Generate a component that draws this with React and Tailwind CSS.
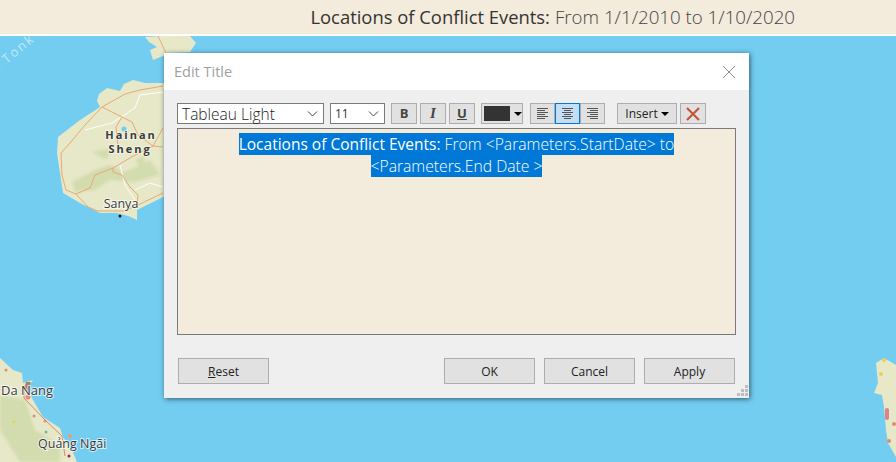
import React from 'react';

const ui = "font-['Open_Sans',sans-serif]";

// map background: Hainan and the bits of the Vietnamese coast
const MapBackground = () => (
  <svg className="absolute left-0 top-0" width="896" height="462" viewBox="0 0 896 462">
    <defs>
      <filter id="soft"><feGaussianBlur stdDeviation="1.5" /></filter>
    </defs>
    <path d="M145 37 L160 36 L190 36 L196 43 L190 52 L170 53 L153 60 L150 50 L157 47 L149 42 Z" fill="#e6e8c8" />
    <path d="M97 101 L99 94 L107 88 L120 91 L124 84 L133 80 L145 83 L163 83 L240 90 L240 190 L163 197 L137 210 L137 220 L128 216 L117 213 L100 213 L80 203 L63 193 L60 173 L57 153 L58 137 L80 120 L100 107 Z" fill="#e6e8c8" />
    <g filter="url(#soft)" fill="#d3dcae">
      <path d="M72 182 L95 170 L110 165 L125 172 L150 160 L160 175 L135 182 L110 180 L95 190 L75 192 Z" />
      <path d="M92 152 L112 148 L106 160 Z" />
      <path d="M135 160 L145 155 L143 172 Z" />
    </g>
    <g fill="none" stroke="#fff" strokeWidth="1">
      <path d="M85 130 L112 123 L135 108 L140 95 L163 92" />
      <path d="M120 165 L125 185 L135 200" />
      <path d="M135 190 L150 183 L163 187" />
    </g>
    <g fill="none" stroke="#eba873" strokeWidth="1">
      <path d="M163 86 L140 90 L125 94 L102 107 L85 125 L70 143 L61 153 L62 175 L66 190 L76 194 L90 188 L95 175 L113 168 L135 155 L153 146 L163 147" />
      <path d="M76 194 L88 207 L98 211 L125 211 L137 205 L138 195 L130 187 L122 175 L113 172 L113 168" />
      <path d="M102 107 L122 117 L132 122 L138 135 L153 146 L163 128" />
      <path d="M122 117 L116 127 L118 145" />
      <path d="M138 205 L163 193" />
      <path d="M158 36 L166 53" />
    </g>
    <circle cx="124" cy="129" r="2.5" fill="#72cdf1" />
    <circle cx="120" cy="216" r="1.5" fill="#111" />

    <path d="M0 358 L13 370 L22 373 L23 383 L33 380 L28 388 L33 400 L43 417 L60 428 L63 437 L72 450 L77 462 L0 462 Z" fill="#e6e8c8" />
    <g filter="url(#soft)" fill="#d3dcae">
      <path d="M0 395 L25 400 L35 430 L60 445 L60 462 L20 462 L0 430 Z" />
    </g>
    <path d="M24 385 L24 398 L45 420 L62 436 L65 456" fill="none" stroke="#d98a68" strokeWidth="1" />
    <path d="M26 382 L31 382 L28 392 L24 390 Z" fill="#a88260" />
    <circle cx="28" cy="397" r="2.5" fill="#e38a82" />
    <circle cx="6" cy="370" r="1.5" fill="#e38a82" />
    <circle cx="34" cy="416" r="1.5" fill="#e38a82" />
    <circle cx="45" cy="421" r="1.5" fill="#e38a82" />
    <circle cx="70" cy="436" r="2" fill="#e3a070" />
    <circle cx="69" cy="456" r="1.5" fill="#a02838" />
    <circle cx="14" cy="422" r="1.5" fill="#e8d060" />
    <circle cx="46" cy="432" r="1.5" fill="#70b8a0" />

    <path d="M876 363 L884 358 L896 365 L896 457 L888 443 L886 430 L884 407 L882 395 L874 393 L878 383 Z" fill="#e6e8c8" />
    <rect x="885" y="408" width="4" height="12" rx="2" fill="#e0818a" />
    <circle cx="889" cy="441" r="2" fill="#e08a72" />
    <circle cx="894" cy="424" r="2" fill="#e08a72" />
    <circle cx="881" cy="374" r="2" fill="#e8d060" />
    <circle cx="884" cy="360" r="2" fill="#e8d060" />

    <g className="font-['Open_Sans',sans-serif]" paintOrder="stroke" stroke="#ffffffb0" strokeWidth="2">
      <text x="131" y="139" textAnchor="middle" fontSize="11" fontWeight="700" letterSpacing="2" fill="#3a3a3a" stroke="#ffffff80">Hainan</text>
      <text x="130" y="153" textAnchor="middle" fontSize="11" fontWeight="700" letterSpacing="2" fill="#3a3a3a" stroke="#ffffff80">Sheng</text>
      <text x="121" y="208" textAnchor="middle" fontSize="12.5" fill="#3a3a3a">Sanya</text>
      <text x="1" y="395" fontSize="13" fill="#3a3a3a">Da Nang</text>
      <text x="38" y="448" fontSize="12.5" fill="#3a3a3a">Quảng Ngãi</text>
    </g>
    <text x="-5" y="74" transform="rotate(-40 -5 74)" className="font-['Open_Sans',sans-serif]" fontSize="13" letterSpacing="2" fill="#c4e8f6">n Tonk</text>
  </svg>
);

const ToolButton = ({ children, className = '' }) => (
  <div className={`flex h-[21px] items-center justify-center border border-[#adadad] bg-[#e1e1e1] text-[#444] ${className}`}>
    {children}
  </div>
);

const Chevron = () => (
  <svg className="absolute right-[5px] top-[7px]" width="11" height="6" viewBox="0 0 11 6" fill="none" stroke="#444" strokeWidth="1">
    <path d="M1 0.5 L5.5 5 L10 0.5" />
  </svg>
);

const AlignIcon = ({ lines }) => (
  <svg width="13" height="11" viewBox="0 0 13 11" stroke="#555" strokeWidth="1">
    {lines.map(([x1, x2], i) => (
      <path key={i} d={`M${x1} ${i * 2 + 0.5} H${x2}`} />
    ))}
  </svg>
);

const DialogButton = ({ children, className = 'w-[91px]' }) => (
  <button className={`h-[26px] ${className} border border-[#adadad] bg-[#e1e1e1] pt-px text-[12px] text-[#222]`}>
    {children}
  </button>
);

const Toolbar = () => (
  <div className="flex h-[21px] items-start">
    <div className="relative h-[21px] w-[147px] border border-[#7a7a7a] bg-white pl-[4px] text-[15.5px] font-light leading-[20px] text-[#222]">
      Tableau Light
      <Chevron />
    </div>
    <div className="relative ml-[6px] h-[21px] w-[55px] border border-[#7a7a7a] bg-white pl-[4px] text-[12px] leading-[19px] text-[#333]">
      11
      <Chevron />
    </div>
    <ToolButton className="ml-[6px] w-[26px] text-[13px] font-bold">B</ToolButton>
    <ToolButton className="ml-[3px] w-[26px] font-['Liberation_Serif',serif] text-[15px] font-bold italic">I</ToolButton>
    <ToolButton className="ml-[3px] w-[26px] text-[13px] font-bold underline">U</ToolButton>
    <div className="ml-[6px] flex h-[21px] w-[42px] items-center border border-[#adadad] bg-[#e1e1e1] pl-[2px]">
      <div className="h-[15px] w-[27px] bg-[#333]" />
      <div className="ml-[4px] h-0 w-0 border-x-[4px] border-t-[4px] border-x-transparent border-t-black" />
    </div>
    <div className="ml-[7px] flex">
      <ToolButton className="w-[25px]"><AlignIcon lines={[[1, 12], [1, 9], [1, 12], [1, 9], [1, 12], [1, 9]]} /></ToolButton>
      <ToolButton className="w-[25px] !border-[#0078d7] !bg-[#c4dff5]"><AlignIcon lines={[[1, 12], [3, 10], [1, 12], [3, 10], [1, 12], [3, 10]]} /></ToolButton>
      <ToolButton className="w-[25px]"><AlignIcon lines={[[1, 12], [4, 12], [1, 12], [4, 12], [1, 12], [4, 12]]} /></ToolButton>
    </div>
    <ToolButton className="ml-[12px] w-[60px] gap-[3px] text-[12px] !text-[#222]">
      Insert
      <span className="h-0 w-0 border-x-[4px] border-t-[4px] border-x-transparent border-t-black" />
    </ToolButton>
    <ToolButton className="ml-[3px] w-[26px]">
      <svg width="14" height="14" viewBox="0 0 14 14" stroke="#c0583c" strokeWidth="2.2" fill="none">
        <path d="M1 1 L13 13 M13 1 L1 13" />
      </svg>
    </ToolButton>
  </div>
);

const EditTitleDialog = () => (
  <div className={`absolute left-[164px] top-[53px] flex h-[345px] w-[585px] flex-col bg-[#efefef] shadow-[1px_1px_5px_rgba(30,50,60,0.75)] ${ui}`}>
    <div className="flex h-[37px] shrink-0 items-center justify-between bg-white pl-[10px] pr-[13px]">
      <span className="text-[14.5px] text-[#a0a0a0]">Edit Title</span>
      <svg width="14" height="14" viewBox="0 0 14 14" stroke="#8a8a8a" strokeWidth="1" fill="none">
        <path d="M1 1 L13 13 M13 1 L1 13" />
      </svg>
    </div>

    <div className="flex min-h-0 flex-1 flex-col px-[13px] pt-[13px]">
      <Toolbar />
      <div className="mt-[4px] h-[207px] w-[559px] border border-[#7a7a7a] bg-[#f3ebdc] px-[40px] pt-[4px] text-center text-[15.7px] leading-[22px]">
        <span className="bg-[#0078d7] font-light text-white">
          <span className="text-[15.5px] font-medium">Locations of Conflict Events:</span> From &lt;Parameters.StartDate&gt; to &lt;Parameters.End Date &gt;
        </span>
      </div>
      <div className="mt-[23px] flex justify-between pl-px pr-[1px]">
        <DialogButton><span className="underline">R</span>eset</DialogButton>
        <div className="flex gap-[9px]">
          <DialogButton>OK</DialogButton>
          <DialogButton>Cancel</DialogButton>
          <DialogButton>Apply</DialogButton>
        </div>
      </div>
    </div>

    {/* resize grip */}
    <svg className="absolute bottom-[2px] right-[1px]" width="11" height="11" viewBox="0 0 11 11" fill="#bdbdbd">
      <rect x="8" y="0" width="3" height="3" />
      <rect x="4" y="4" width="3" height="3" />
      <rect x="8" y="4" width="3" height="3" />
      <rect x="0" y="8" width="3" height="3" />
      <rect x="4" y="8" width="3" height="3" />
      <rect x="8" y="8" width="3" height="3" />
    </svg>
  </div>
);

export default function App() {
  return (
    <div className="relative h-[462px] w-[896px] overflow-hidden bg-[#72cdf1]">
      <MapBackground />
      <header className={`relative flex h-[36px] items-center justify-end border-b-2 border-white bg-[#f3ebdc] pr-[101px] text-[#444] ${ui}`}>
        <span className="text-[18.4px] font-medium text-[#333]">Locations of Conflict Events:</span>
        <span className="ml-[5px] text-[18.7px] font-light">From 1/1/2010 to 1/10/2020</span>
      </header>
      <EditTitleDialog />
    </div>
  );
}
